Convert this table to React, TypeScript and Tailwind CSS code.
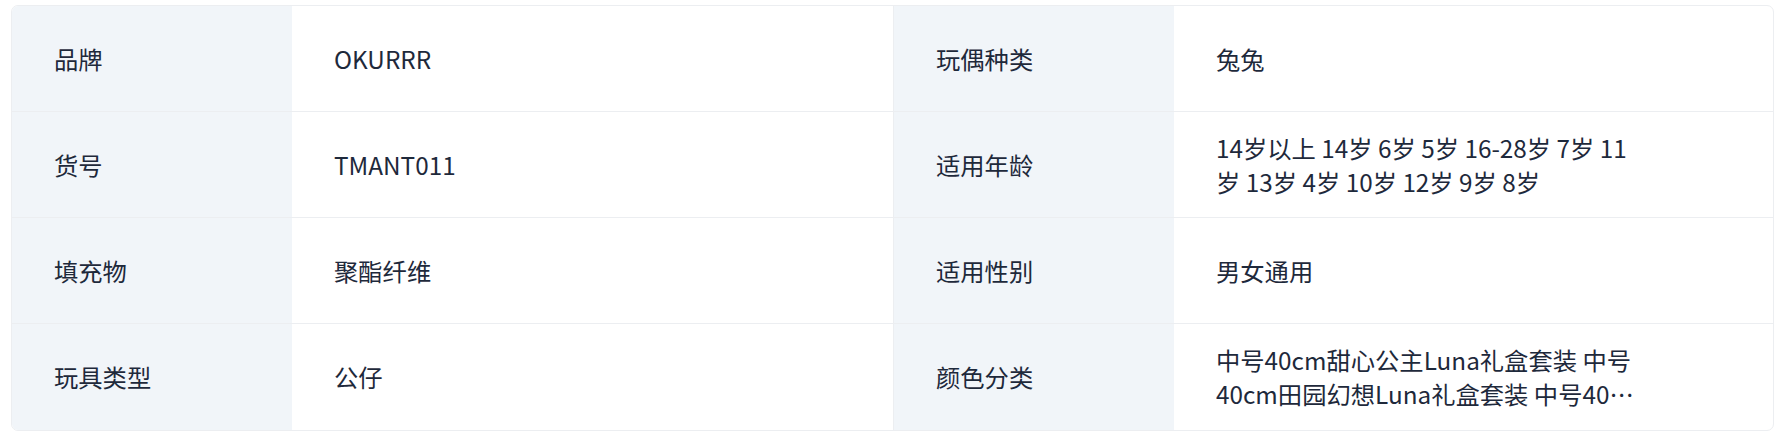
import React from "react";

type Item = { label: string; value: string };

const rows: [Item, Item][] = [
  [
    { label: "品牌", value: "OKURRR" },
    { label: "玩偶种类", value: "兔兔" },
  ],
  [
    { label: "货号", value: "TMANT011" },
    {
      label: "适用年龄",
      value: "14岁以上 14岁 6岁 5岁 16-28岁 7岁 11岁 13岁 4岁 10岁 12岁 9岁 8岁",
    },
  ],
  [
    { label: "填充物", value: "聚酯纤维" },
    { label: "适用性别", value: "男女通用" },
  ],
  [
    { label: "玩具类型", value: "公仔" },
    {
      label: "颜色分类",
      value:
        "中号40cm甜心公主Luna礼盒套装 中号40cm田园幻想Luna礼盒套装 中号40cm星空梦境Luna礼盒套装",
    },
  ],
];

function Cell({ item, right, last }: { item: Item; right?: boolean; last?: boolean }) {
  return (
    <div
      className={
        "flex h-[106px] " +
        (right ? "border-l border-[#eceef1] " : "") +
        (last ? "" : "border-b border-[#eceef1]")
      }
    >
      <div className="flex w-[280px] shrink-0 items-center bg-[#f1f5f9] px-[42px]">
        <span className="text-[24.3px] leading-[34px] text-[#1e293b]">{item.label}</span>
      </div>
      <div className="flex flex-1 items-center pl-[42px] pr-[42px]">
        <span className="line-clamp-2 max-w-[429px] text-[24.3px] leading-[34px] text-[#1e293b]">
          {item.value}
        </span>
      </div>
    </div>
  );
}

export default function App() {
  return (
    <div
      className="min-h-[441px] bg-white pl-[11px] pt-[5px]"
      style={{ fontFamily: '"Noto Sans CJK SC", "Noto Sans", sans-serif' }}
    >
      <div className="w-[1763px] overflow-hidden rounded-[7px] border border-[#eceef1]">
        <div className="grid grid-cols-[881px_1fr]">
          {rows.map(([a, b], i) => (
            <React.Fragment key={i}>
              <Cell item={a} last={i === rows.length - 1} />
              <Cell item={b} right last={i === rows.length - 1} />
            </React.Fragment>
          ))}
        </div>
      </div>
    </div>
  );
}
